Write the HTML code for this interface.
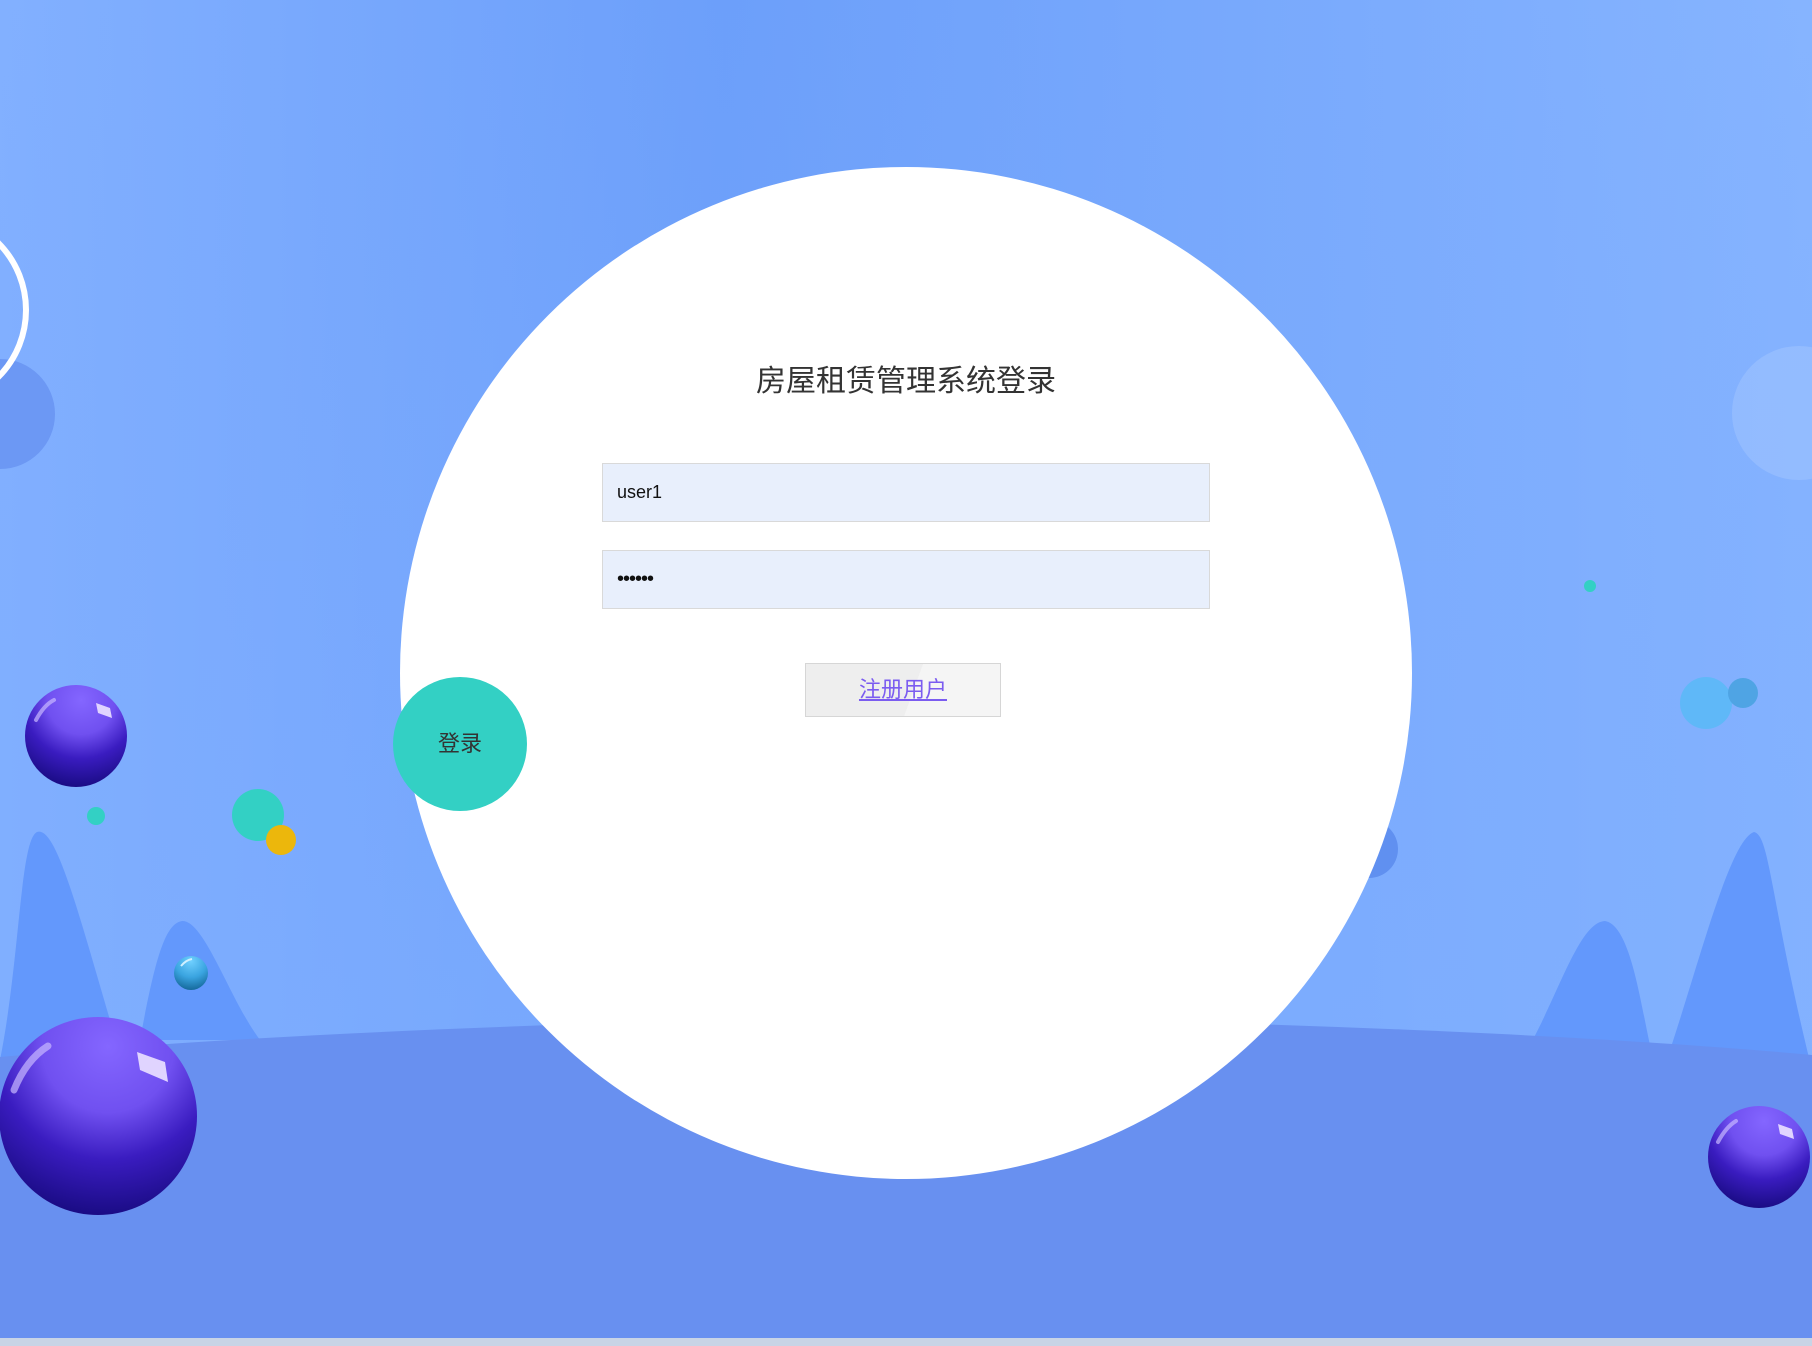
<!DOCTYPE html>
<html><head><meta charset="utf-8">
<style>
html,body{margin:0;padding:0;width:1812px;height:1346px;overflow:hidden;font-family:"Liberation Sans","Noto Sans CJK SC",sans-serif;}
#bg{position:absolute;left:0;top:0}
.t{position:absolute;left:0;width:1812px;top:356px;text-align:center;font-size:30px;color:#333;}
.in{position:absolute;left:602px;width:606px;height:57px;background:#e8effc;border:1px solid #d9d9d9;font-size:18px;color:#111;line-height:57px;padding-left:14px;box-sizing:border-box;width:608px;height:59px;}
.reg{position:absolute;left:805px;top:663px;width:196px;height:54px;box-sizing:border-box;border:1px solid #d6d6d6;background:linear-gradient(110deg,#eeeeee 0 55%,#f5f5f5 55%);text-align:center;line-height:52px;font-size:22px;color:#7b5cf0;text-decoration:underline;}
.login{position:absolute;left:393px;top:677px;width:134px;height:134px;border-radius:50%;background:#33d0c4;text-align:center;line-height:134px;font-size:22px;color:#333;}
</style></head><body>
<svg id="bg" width="1812" height="1346" viewBox="0 0 1812 1346">
<defs>
<linearGradient id="sky" x1="0" y1="0" x2="1" y2="0">
<stop offset="0" stop-color="#82b0ff"/><stop offset="0.4" stop-color="#6c9ffa"/><stop offset="1" stop-color="#86b4ff"/></linearGradient>
<linearGradient id="sky2" x1="0" y1="0" x2="0" y2="1">
<stop offset="0" stop-color="#7aa8ff" stop-opacity="0"/><stop offset="1" stop-color="#80b0ff" stop-opacity="0.6"/></linearGradient>
<radialGradient id="ball" cx="0.55" cy="0.15" r="0.95">
<stop offset="0" stop-color="#8466ff"/><stop offset="0.35" stop-color="#7050f0"/><stop offset="0.6" stop-color="#3a1cc0"/><stop offset="1" stop-color="#0f0670"/></radialGradient>
<radialGradient id="bball" cx="0.5" cy="0.15" r="0.95">
<stop offset="0" stop-color="#70d0ff"/><stop offset="0.5" stop-color="#3aa4e0"/><stop offset="1" stop-color="#0c5a8a"/></radialGradient>
</defs>
<rect width="1812" height="1346" fill="url(#sky)"/>
<rect width="1812" height="1346" fill="url(#sky2)"/>
<circle cx="0" cy="414" r="55" fill="#6c98f4"/>
<circle cx="-69" cy="310" r="95" fill="none" stroke="#fff" stroke-width="6"/>
<circle cx="1799" cy="413" r="67" fill="#ffffff" opacity="0.13"/>
<circle cx="1590" cy="586" r="6" fill="#33d0c4"/>
<circle cx="1706" cy="703" r="26" fill="#5fb8f8"/>
<circle cx="1743" cy="693" r="15" fill="#4fa4e4"/>
<circle cx="1369" cy="849" r="29" fill="#6090f0"/>
<!-- mountains -->
<path d="M0 1060 C20 960 20 840 37 832 C55 826 75 900 110 1020 L110 1060 Z" fill="#6398fc"/>
<path d="M140 1040 C155 960 165 922 183 921 C205 922 230 1000 260 1040 Z" fill="#6398fc"/>
<path d="M1670 1050 C1700 960 1730 840 1754 832 C1770 835 1770 900 1812 1070 Z" fill="#6398fc"/>
<path d="M1530 1045 C1560 990 1580 922 1605 921 C1630 925 1640 1000 1650 1045 Z" fill="#6398fc"/>
<!-- ground -->
<path d="M0 1057 C300 1030 700 1018 906 1018 C1200 1018 1600 1035 1812 1055 L1812 1346 L0 1346 Z" fill="#6890f0"/>
<rect x="0" y="1338" width="1812" height="8" fill="#c8d4e6"/>
<!-- white circle -->
<circle cx="906" cy="673" r="506" fill="#fff"/>
<!-- dots left -->
<circle cx="96" cy="816" r="9" fill="#33d0c4"/>
<circle cx="258" cy="815" r="26" fill="#33d0c4"/>
<circle cx="281" cy="840" r="15" fill="#ecb70c"/>
<!-- balls -->
<g>
<circle cx="76" cy="736" r="51" fill="url(#ball)"/>
<path d="M36 720 Q44 705 54 700" stroke="#c8b8ff" stroke-width="4" fill="none" stroke-linecap="round" opacity="0.7"/>
<path d="M96 703 L110 708 L112 718 L98 713 Z" fill="#e0d4ff"/>
</g>
<g>
<circle cx="98" cy="1116" r="99" fill="url(#ball)"/>
<path d="M14 1090 Q26 1060 48 1046" stroke="#c8b8ff" stroke-width="7" fill="none" stroke-linecap="round" opacity="0.7"/>
<path d="M137 1052 L165 1062 L168 1082 L140 1070 Z" fill="#e0d4ff"/>
</g>
<g>
<circle cx="1759" cy="1157" r="51" fill="url(#ball)"/>
<path d="M1718 1142 Q1726 1127 1736 1121" stroke="#c8b8ff" stroke-width="4" fill="none" stroke-linecap="round" opacity="0.7"/>
<path d="M1778 1124 L1792 1129 L1794 1139 L1780 1134 Z" fill="#e0d4ff"/>
</g>
<g>
<circle cx="191" cy="973" r="17" fill="url(#bball)"/>
<path d="M181 966 Q186 960 192 959" stroke="#d0f0ff" stroke-width="2" fill="none"/>
</g>
</svg>
<div class="t">房屋租赁管理系统登录</div>
<div class="in" style="top:463px">user1</div>
<div class="in" style="top:550px;font-size:20px;letter-spacing:-1px">••••••</div>
<div class="reg">注册用户</div>
<div class="login">登录</div>
</body></html>
